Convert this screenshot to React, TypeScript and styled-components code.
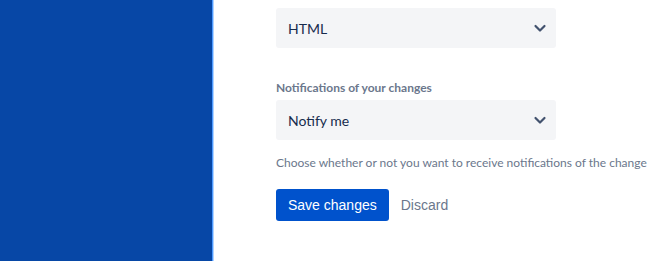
import React from 'react';
import styled, { createGlobalStyle } from 'styled-components';

const GlobalStyle = createGlobalStyle`
  html, body {
    margin: 0;
    padding: 0;
    background: #fff;
    overflow: hidden;
  }
  body {
    font-family: Lato, "Liberation Sans", sans-serif;
  }
`;

const Layout = styled.div`
  display: flex;
  height: 261px;
  width: 648px;
`;

const Sidebar = styled.div`
  width: 212px;
  flex: none;
  background: #0747a6;
  border-right: 1px solid #4c9aff;
  box-shadow: 1px 0 0 #b3d4ff;
`;

const Main = styled.main`
  flex: 1;
  padding-left: 63px;
  min-width: 0;
`;

const Form = styled.form`
  margin-top: -12px;
  display: flex;
  flex-direction: column;
`;

const Field = styled.div<{ $gap?: number }>`
  display: flex;
  flex-direction: column;
  margin-bottom: ${(p) => p.$gap ?? 0}px;
`;

const Label = styled.label`
  font-size: 12px;
  line-height: 16px;
  font-weight: 700;
  color: #6b778c;
  margin-bottom: 4px;
  white-space: nowrap;
`;

const SelectBox = styled.div`
  width: 280px;
  height: 40px;
  box-sizing: border-box;
  background: #f4f5f7;
  border-radius: 3px;
  display: flex;
  align-items: center;
  justify-content: space-between;
  padding: 0 4px 0 12px;
  font-size: 14px;
  color: #172b4d;
`;

const Chevron = styled.svg`
  width: 24px;
  height: 24px;
  color: #42526e;
`;

const Help = styled.div`
  margin-top: 15px;
  font-size: 12px;
  line-height: 16px;
  color: #6b778c;
  white-space: nowrap;
`;

const Actions = styled.div`
  margin-top: 18px;
  display: flex;
  align-items: center;
  gap: 4px;
`;

const Button = styled.button<{ $primary?: boolean }>`
  height: 32px;
  padding: 0 ${(p) => (p.$primary ? 12 : 8)}px;
  border: none;
  border-radius: 3px;
  font-family: "Liberation Sans", Arial, sans-serif;
  font-size: 14px;
  background: ${(p) => (p.$primary ? '#0052cc' : 'transparent')};
  color: ${(p) => (p.$primary ? '#fff' : '#6b778c')};
  cursor: pointer;
`;

const Select: React.FC<{ value: string }> = ({ value }) => (
  <SelectBox>
    <span>{value}</span>
    <Chevron viewBox="0 0 24 24" fill="none">
      <path d="M7.5 10l4.5 4.5 4.5-4.5" stroke="currentColor" strokeWidth="2.2" strokeLinecap="round" strokeLinejoin="round" />
    </Chevron>
  </SelectBox>
);

export default function App() {
  return (
    <>
      <GlobalStyle />
      <Layout>
        <Sidebar />
        <Main>
          <Form onSubmit={(e) => e.preventDefault()}>
            <Field $gap={32}>
              <Label>Email notifications format</Label>
              <Select value="HTML" />
            </Field>
            <Field>
              <Label>Notifications of your changes</Label>
              <Select value="Notify me" />
            </Field>
            <Help>Choose whether or not you want to receive notifications of the change</Help>
            <Actions>
              <Button $primary type="submit">Save changes</Button>
              <Button type="button">Discard</Button>
            </Actions>
          </Form>
        </Main>
      </Layout>
    </>
  );
}
